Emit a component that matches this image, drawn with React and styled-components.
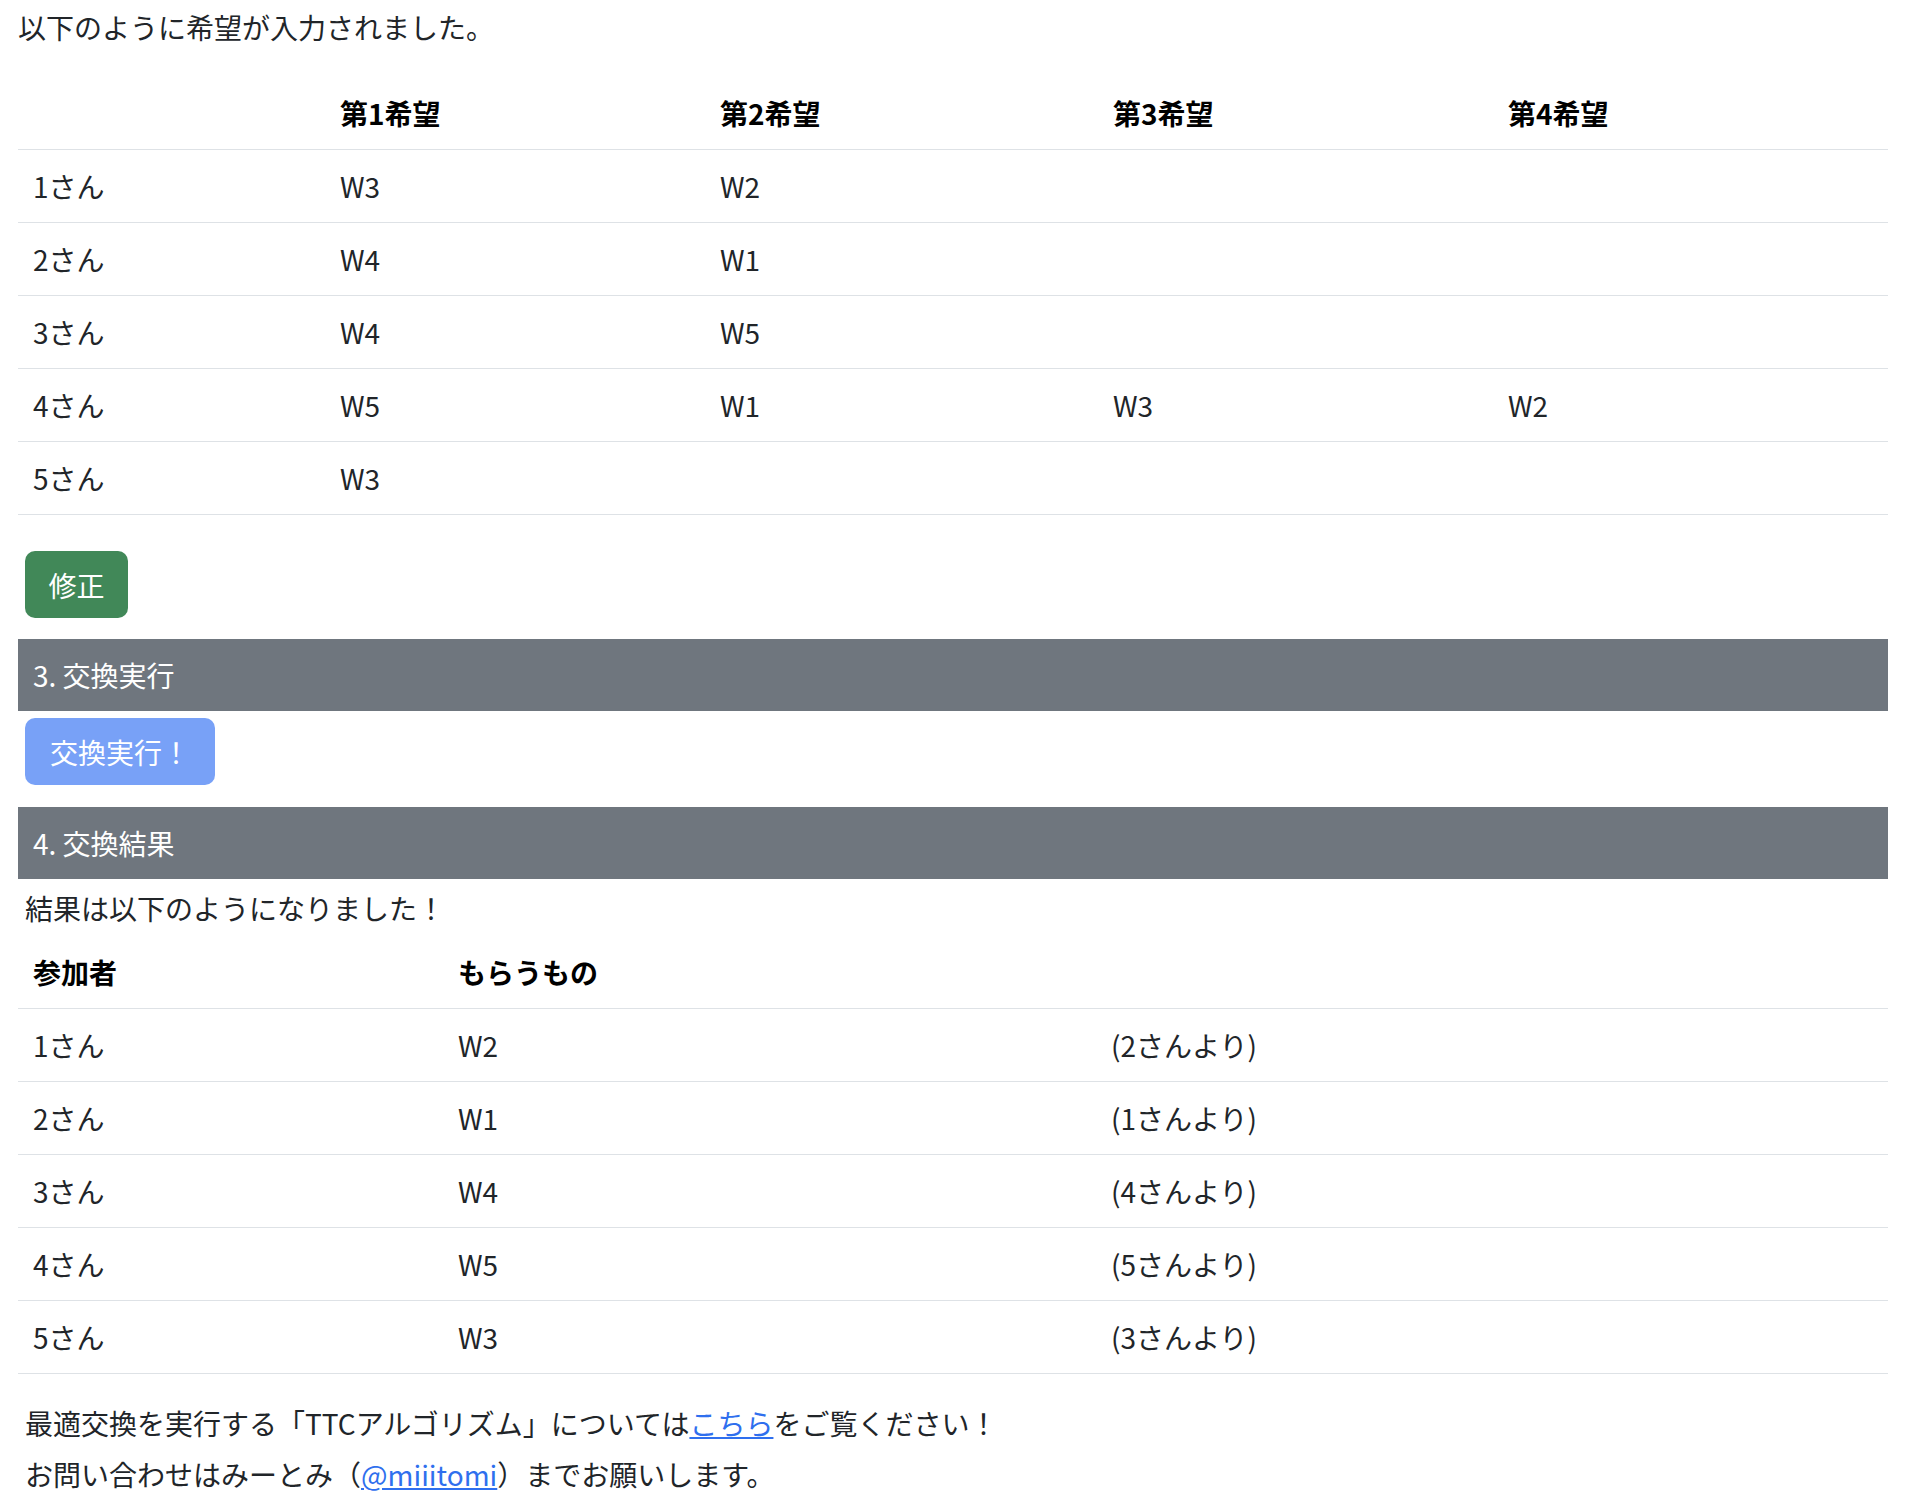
import React from "react";
import styled, { createGlobalStyle } from "styled-components";

const Global = createGlobalStyle`
  html, body { margin: 0; padding: 0; background: #fff; }
  body {
    font-family: "Noto Sans CJK JP", "Noto Sans", sans-serif;
    font-size: 28px;
    line-height: 42px;
    color: #212529;
  }
`;

const Page = styled.main`
  padding: 6px 20px 8px 18px;
`;

const Lead = styled.p`
  margin: ${(p) => p.$top || 0}px 0 ${(p) => p.$bottom || 0}px;
  padding-left: ${(p) => p.$indent || 0}px;
`;

const Table = styled.table`
  width: 100%;
  border-collapse: collapse;
  table-layout: fixed;
`;

const Col = styled.col`
  width: ${(p) => p.$w}px;
`;

const Th = styled.th`
  text-align: left;
  font-weight: 700;
  color: #000;
  padding: 15px 15px;
  border-bottom: 1px solid #dee2e6;
  vertical-align: middle;
`;

const Td = styled.td`
  text-align: left;
  padding: 15px 15px;
  border-bottom: 1px solid #dee2e6;
  vertical-align: middle;
  color: #212529;
`;

const Actions = styled.div`
  margin-top: ${(p) => p.$top || 0}px;
  padding-left: 7px;
  display: flex;
`;

const Button = styled.button`
  display: inline-flex;
  align-items: center;
  height: 67px;
  padding: 0 ${(p) => p.$pad || 23.5}px;
  border: none;
  border-radius: 10px;
  font-family: inherit;
  font-size: 28px;
  line-height: 42px;
  color: #fff;
  background: ${(p) => (p.$variant === "success" ? "#418858" : "#78a1f7")};
  cursor: pointer;
`;

const SectionBar = styled.h2`
  margin: ${(p) => p.$top || 0}px 0 0;
  height: 72px;
  padding: 0 15px;
  display: flex;
  align-items: center;
  background: #6f767e;
  color: #fff;
  font-size: 28px;
  font-weight: 400;
  line-height: 42px;
`;

const Link = styled.a`
  color: #2f6fee;
  text-decoration: underline;
`;

const wishes = [
  ["1さん", "W3", "W2", "", ""],
  ["2さん", "W4", "W1", "", ""],
  ["3さん", "W4", "W5", "", ""],
  ["4さん", "W5", "W1", "W3", "W2"],
  ["5さん", "W3", "", "", ""],
];

const results = [
  ["1さん", "W2", "(2さんより)"],
  ["2さん", "W1", "(1さんより)"],
  ["3さん", "W4", "(4さんより)"],
  ["4さん", "W5", "(5さんより)"],
  ["5さん", "W3", "(3さんより)"],
];

export default function App() {
  return (
    <>
      <Global />
      <Page>
        <Lead $bottom={29}>以下のように希望が入力されました。</Lead>
        <Table>
          <colgroup>
            <Col $w={307} />
            <Col $w={380} />
            <Col $w={393} />
            <Col $w={395} />
            <Col $w={395} />
          </colgroup>
          <thead>
            <tr>
              <Th></Th>
              <Th>第1希望</Th>
              <Th>第2希望</Th>
              <Th>第3希望</Th>
              <Th>第4希望</Th>
            </tr>
          </thead>
          <tbody>
            {wishes.map((row) => (
              <tr key={row[0]}>
                {row.map((c, i) => (
                  <Td key={i}>{c}</Td>
                ))}
              </tr>
            ))}
          </tbody>
        </Table>

        <Actions $top={36}>
          <Button $variant="success">修正</Button>
        </Actions>

        <SectionBar $top={21}>3. 交換実行</SectionBar>
        <Actions $top={7}>
          <Button $variant="primary" $pad={25}>交換実行！</Button>
        </Actions>

        <SectionBar $top={22}>4. 交換結果</SectionBar>
        <Lead $top={8} $bottom={7} $indent={7}>
          結果は以下のようになりました！
        </Lead>
        <Table>
          <colgroup>
            <Col $w={425} />
            <Col $w={653} />
            <Col $w={792} />
          </colgroup>
          <thead>
            <tr>
              <Th>参加者</Th>
              <Th>もらうもの</Th>
              <Th></Th>
            </tr>
          </thead>
          <tbody>
            {results.map((row) => (
              <tr key={row[0]}>
                {row.map((c, i) => (
                  <Td key={i}>{c}</Td>
                ))}
              </tr>
            ))}
          </tbody>
        </Table>

        <Lead $top={28} $indent={7}>
          最適交換を実行する「TTCアルゴリズム」については
          <Link href="#">こちら</Link>をご覧ください！
        </Lead>
        <Lead $top={9} $indent={7}>
          お問い合わせはみーとみ（<Link href="#">@miiitomi</Link>）までお願いします。
        </Lead>
      </Page>
    </>
  );
}
